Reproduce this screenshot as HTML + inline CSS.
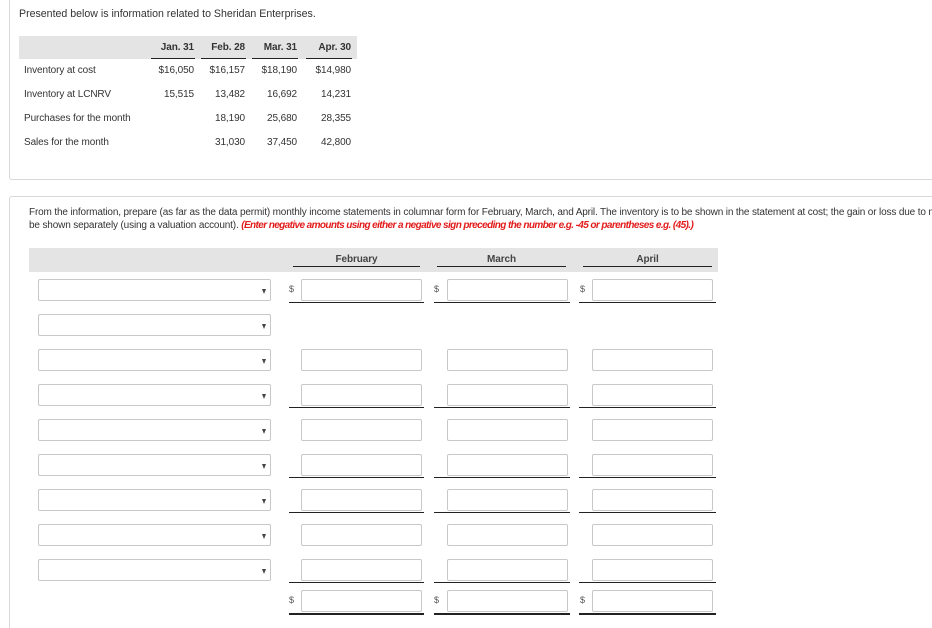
<!DOCTYPE html>
<html><head><style>
*{box-sizing:border-box;margin:0;padding:0}
html,body{width:932px;height:628px;overflow:hidden}
body{background:#fff;position:relative;font-family:"Liberation Sans",sans-serif;color:#333;}
.a{position:absolute;white-space:nowrap}
.card{position:absolute;border:1px solid #d8d8d8;border-right:none;border-radius:3px 0 0 3px}
.t{font-size:10px;letter-spacing:-0.1px}
.r{text-align:right}
.sel{position:absolute;left:38px;width:233px;height:22px;border:1px solid #c8c8c8;border-radius:2px;background:#fff}
.sel:after{content:"";position:absolute;right:4px;top:9px;border-left:2.5px solid transparent;border-right:2.5px solid transparent;border-top:5px solid #444}
.in{position:absolute;width:121px;height:22px;border:1px solid #c8c8c8;border-radius:2px;background:#fff}
.ln{position:absolute;height:1px;background:#222}
.d{position:absolute;font-size:9px;color:#555}
</style></head><body>
<div class="card" style="left:9px;top:-3px;width:930px;height:183px"></div>
<div class="card" style="left:9px;top:196px;width:930px;height:500px"></div>

<div class="a t" style="left:19px;top:8px;font-size:10.6px;letter-spacing:0">Presented below is information related to Sheridan Enterprises.</div>
<div class="a" style="left:19px;top:36px;width:338px;height:23px;background:#e4e4e4"></div>
<div class="a t" style="left:146px;top:42px;width:48px;text-align:right;font-weight:bold">Jan. 31</div>
<div class="a t" style="left:197px;top:42px;width:48px;text-align:right;font-weight:bold">Feb. 28</div>
<div class="a t" style="left:249px;top:42px;width:48px;text-align:right;font-weight:bold">Mar. 31</div>
<div class="a t" style="left:303px;top:42px;width:48px;text-align:right;font-weight:bold">Apr. 30</div>
<div class="ln" style="left:151px;top:58px;width:44px"></div>
<div class="ln" style="left:201px;top:58px;width:45px"></div>
<div class="ln" style="left:252px;top:58px;width:46px"></div>
<div class="ln" style="left:306px;top:58px;width:46px"></div>

<div class="a t" style="left:24px;top:65px">Inventory at cost</div>
<div class="a t" style="left:24px;top:89px">Inventory at LCNRV</div>
<div class="a t" style="left:24px;top:113px">Purchases for the month</div>
<div class="a t" style="left:24px;top:137px">Sales for the month</div>

<div class="a t r" style="left:134px;top:65px;width:60px">$16,050</div>
<div class="a t r" style="left:185px;top:65px;width:60px">$16,157</div>
<div class="a t r" style="left:237px;top:65px;width:60px">$18,190</div>
<div class="a t r" style="left:291px;top:65px;width:60px">$14,980</div>
<div class="a t r" style="left:134px;top:89px;width:60px">15,515</div>
<div class="a t r" style="left:185px;top:89px;width:60px">13,482</div>
<div class="a t r" style="left:237px;top:89px;width:60px">16,692</div>
<div class="a t r" style="left:291px;top:89px;width:60px">14,231</div>
<div class="a t r" style="left:185px;top:113px;width:60px">18,190</div>
<div class="a t r" style="left:237px;top:113px;width:60px">25,680</div>
<div class="a t r" style="left:291px;top:113px;width:60px">28,355</div>
<div class="a t r" style="left:185px;top:137px;width:60px">31,030</div>
<div class="a t r" style="left:237px;top:137px;width:60px">37,450</div>
<div class="a t r" style="left:291px;top:137px;width:60px">42,800</div>

<div class="a" style="left:29px;top:207px;font-size:10px;letter-spacing:-0.15px">From the information, prepare (as far as the data permit) monthly income statements in columnar form for February, March, and April. The inventory is to be shown in the statement at cost; the gain or loss due to market fluctuations is to</div>
<div class="a" style="left:29px;top:220px;font-size:10px;letter-spacing:-0.15px">be shown separately (using a valuation account). <span style="color:#e21b1b;font-style:italic;font-weight:bold;letter-spacing:-0.6px">(Enter negative amounts using either a negative sign preceding the number e.g. -45 or parentheses e.g. (45).)</span></div>

<div class="a" style="left:29px;top:248px;width:689px;height:24px;background:#e4e4e4"></div>
<div class="a t" style="left:293px;top:254px;width:127px;text-align:center;font-weight:bold;color:#444">February</div>
<div class="a t" style="left:437px;top:254px;width:129px;text-align:center;font-weight:bold;color:#444">March</div>
<div class="a t" style="left:583px;top:254px;width:129px;text-align:center;font-weight:bold;color:#444">April</div>
<div class="ln" style="left:293px;top:266px;width:127px"></div>
<div class="ln" style="left:437px;top:266px;width:129px"></div>
<div class="ln" style="left:583px;top:266px;width:129px"></div>

<div class="sel" style="top:279px"></div>
<div class="sel" style="top:314px"></div>
<div class="sel" style="top:349px"></div>
<div class="sel" style="top:384px"></div>
<div class="sel" style="top:419px"></div>
<div class="sel" style="top:454px"></div>
<div class="sel" style="top:489px"></div>
<div class="sel" style="top:524px"></div>
<div class="sel" style="top:559px"></div>

<div class="in" style="left:301px;top:279px"></div><div class="in" style="left:447px;top:279px"></div><div class="in" style="left:592px;top:279px"></div>
<div class="in" style="left:301px;top:349px"></div><div class="in" style="left:447px;top:349px"></div><div class="in" style="left:592px;top:349px"></div>
<div class="in" style="left:301px;top:384px"></div><div class="in" style="left:447px;top:384px"></div><div class="in" style="left:592px;top:384px"></div>
<div class="in" style="left:301px;top:419px"></div><div class="in" style="left:447px;top:419px"></div><div class="in" style="left:592px;top:419px"></div>
<div class="in" style="left:301px;top:454px"></div><div class="in" style="left:447px;top:454px"></div><div class="in" style="left:592px;top:454px"></div>
<div class="in" style="left:301px;top:489px"></div><div class="in" style="left:447px;top:489px"></div><div class="in" style="left:592px;top:489px"></div>
<div class="in" style="left:301px;top:524px"></div><div class="in" style="left:447px;top:524px"></div><div class="in" style="left:592px;top:524px"></div>
<div class="in" style="left:301px;top:559px"></div><div class="in" style="left:447px;top:559px"></div><div class="in" style="left:592px;top:559px"></div>
<div class="in" style="left:301px;top:590px"></div><div class="in" style="left:447px;top:590px"></div><div class="in" style="left:592px;top:590px"></div>

<div class="d" style="left:289px;top:284px">$</div><div class="d" style="left:434px;top:284px">$</div><div class="d" style="left:580px;top:284px">$</div>
<div class="d" style="left:289px;top:595px">$</div><div class="d" style="left:434px;top:595px">$</div><div class="d" style="left:580px;top:595px">$</div>

<div class="ln" style="left:289px;top:302px;width:135px"></div><div class="ln" style="left:434px;top:302px;width:136px"></div><div class="ln" style="left:579px;top:302px;width:137px"></div>
<div class="ln" style="left:289px;top:407px;width:135px"></div><div class="ln" style="left:434px;top:407px;width:136px"></div><div class="ln" style="left:579px;top:407px;width:137px"></div>
<div class="ln" style="left:289px;top:477px;width:135px"></div><div class="ln" style="left:434px;top:477px;width:136px"></div><div class="ln" style="left:579px;top:477px;width:137px"></div>
<div class="ln" style="left:289px;top:512px;width:135px"></div><div class="ln" style="left:434px;top:512px;width:136px"></div><div class="ln" style="left:579px;top:512px;width:137px"></div>
<div class="ln" style="left:289px;top:582px;width:135px"></div><div class="ln" style="left:434px;top:582px;width:136px"></div><div class="ln" style="left:579px;top:582px;width:137px"></div>
<div class="ln" style="left:289px;top:613px;width:135px;height:2px"></div><div class="ln" style="left:434px;top:613px;width:136px;height:2px"></div><div class="ln" style="left:579px;top:613px;width:137px;height:2px"></div>
</body></html>
